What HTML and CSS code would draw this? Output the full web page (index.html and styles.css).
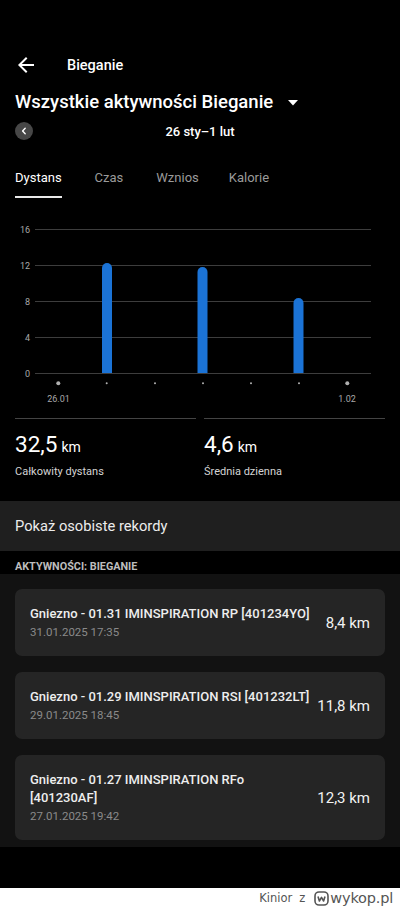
FILE: index.html
```html
<!DOCTYPE html>
<html lang="pl">
<head>
<meta charset="utf-8">
<title>Bieganie</title>
<link rel="stylesheet" href="styles.css">
</head>
<body>
<div class="screen">
  <header class="topbar">
    <svg class="back" width="24" height="24" viewBox="0 0 24 24"><path d="M20 11H7.83l5.59-5.59L12 4l-8 8 8 8 1.41-1.41L7.83 13H20v-2z" fill="#fff"/></svg>
    <span class="topbar-title">Bieganie</span>
  </header>

  <div class="title-row">
    <h1 class="title">Wszystkie aktywności Bieganie</h1>
    <svg class="caret" width="10" height="6" viewBox="0 0 10 6"><path d="M0 0h10L5 5.5z" fill="#fff"/></svg>
  </div>

  <div class="date-row">
    <span class="round-btn"><svg width="8" height="8" viewBox="0 0 8 8"><path d="M5.2 1.2L2.6 4l2.6 2.8" fill="none" stroke="#fff" stroke-width="1.4" stroke-linecap="round" stroke-linejoin="round"/></svg></span>
    <span class="date">26 sty–1 lut</span>
  </div>

  <nav class="tabs">
    <span class="tab active">Dystans</span>
    <span class="tab">Czas</span>
    <span class="tab">Wznios</span>
    <span class="tab">Kalorie</span>
  </nav>

  <svg class="chart" width="400" height="220" viewBox="0 0 400 220">
    <g stroke="#3d3d3d" stroke-width="1">
      <line x1="35" y1="31.5" x2="371" y2="31.5"/>
      <line x1="35" y1="67.5" x2="371" y2="67.5"/>
      <line x1="35" y1="103.5" x2="371" y2="103.5"/>
      <line x1="35" y1="139.5" x2="371" y2="139.5"/>
      <line x1="35" y1="175.5" x2="371" y2="175.5"/>
    </g>
    <g class="axis" text-anchor="end">
      <text x="30" y="34.5">16</text>
      <text x="30" y="70.5">12</text>
      <text x="30" y="106.5">8</text>
      <text x="30" y="142.5">4</text>
      <text x="30" y="178.5">0</text>
    </g>
    <g fill="#1b73d6">
      <path d="M102 175V70a5 5 0 0 1 10 0V175z"/>
      <path d="M197.5 175V74a5 5 0 0 1 10 0V175z"/>
      <path d="M293.5 175V105a5 5 0 0 1 10 0V175z"/>
    </g>
    <g fill="#b0b0b0">
      <circle cx="58.3" cy="185.3" r="2"/>
      <circle cx="106.7" cy="185.3" r="1"/>
      <circle cx="155" cy="185.3" r="1"/>
      <circle cx="203" cy="185.3" r="1"/>
      <circle cx="251" cy="185.3" r="1"/>
      <circle cx="299" cy="185.3" r="1"/>
      <circle cx="347.3" cy="185.3" r="2"/>
    </g>
    <g class="axis" text-anchor="middle">
      <text x="58.5" y="203.5">26.01</text>
      <text x="347" y="203.5">1.02</text>
    </g>
  </svg>

  <section class="stats">
    <div class="stat">
      <div class="stat-value">32,5<span class="unit">km</span></div>
      <div class="stat-label">Całkowity dystans</div>
    </div>
    <div class="stat">
      <div class="stat-value">4,6<span class="unit">km</span></div>
      <div class="stat-label">Średnia dzienna</div>
    </div>
  </section>

  <div class="records">Pokaż osobiste rekordy</div>

  <div class="section-label">AKTYWNOŚCI: BIEGANIE</div>

  <section class="activities">
    <div class="card">
      <div class="card-text">
        <div class="card-title">Gniezno - 01.31 IMINSPIRATION RP [401234YO]</div>
        <div class="card-date">31.01.2025 17:35</div>
      </div>
      <div class="card-km">8,4 km</div>
    </div>
    <div class="card">
      <div class="card-text">
        <div class="card-title">Gniezno - 01.29 IMINSPIRATION RSI [401232LT]</div>
        <div class="card-date">29.01.2025 18:45</div>
      </div>
      <div class="card-km">11,8 km</div>
    </div>
    <div class="card">
      <div class="card-text">
        <div class="card-title">Gniezno - 01.27 IMINSPIRATION RFo [401230AF]</div>
        <div class="card-date">27.01.2025 19:42</div>
      </div>
      <div class="card-km">12,3 km</div>
    </div>
  </section>

  <div class="filler"></div>

  <footer class="watermark">
    <span class="wm-user">Kinior</span>
    <span class="wm-z">z</span>
    <svg class="wm-logo" width="15" height="15" viewBox="0 0 15 15"><rect x="1" y="1" width="13" height="13" rx="4" fill="none" stroke="#555" stroke-width="1.6"/><path d="M4 5.5l1.4 4.5 2.1-3.6 2.1 3.6L11 5.5" fill="none" stroke="#555" stroke-width="1.6" stroke-linejoin="round"/></svg>
    <span class="wm-site">wykop.pl</span>
  </footer>
</div>
</body>
</html>
```

FILE: styles.css
```css
* { box-sizing: border-box; }
html, body { margin: 0; padding: 0; background: #000; }
body {
  font-family: Roboto, "Noto Sans", "Liberation Sans", sans-serif;
  color: #fff;
}
.screen {
  width: 400px;
  height: 908px;
  display: flex;
  flex-direction: column;
  padding-top: 41px;
  overflow: hidden;
}
.topbar {
  height: 48px;
  display: flex;
  align-items: center;
  padding-left: 14px;
}
.back { display: block; }
.topbar-title {
  margin-left: 29px;
  font-size: 14.5px;
  font-weight: 500;
}
.title-row {
  height: 26px;
  display: flex;
  align-items: center;
  padding-left: 15px;
}
.title {
  margin: 0;
  font-size: 18.5px;
  font-weight: 500;
  line-height: 26px;
  letter-spacing: 0;
}
.caret { margin-left: 15px; margin-top: 1px; }
.date-row {
  margin-top: 5px;
  height: 22px;
  display: flex;
  align-items: center;
  padding-left: 15px;
}
.round-btn {
  width: 18px;
  height: 18px;
  border-radius: 50%;
  background: #474747;
  display: flex;
  align-items: center;
  justify-content: center;
}
.date {
  flex: 1;
  text-align: center;
  margin-right: 33px;
  font-size: 13px;
  font-weight: 500;
}
.tabs {
  margin-top: 18px;
  display: flex;
  gap: 33px;
  padding-left: 15px;
}
.tab {
  padding: 8px 0 8px;
  line-height: 20px;
  font-size: 13px;
  color: #9a9a9a;
  border-bottom: 2px solid transparent;
}
.tab.active {
  color: #fff;
  border-bottom-color: #e8e8e8;
}
.tab:nth-child(3) { margin-right: -3px; }
.chart { display: block; }
.axis text {
  font-family: Roboto, sans-serif;
  font-size: 9px;
  fill: #a8a8a8;
}
.stats {
  display: flex;
  gap: 8px;
  padding: 0 15px 21px;
}
.stat {
  flex: 1;
  border-top: 1px solid #444;
  padding-top: 11px;
}
.stat-value {
  font-size: 22.5px;
  line-height: 28px;
}
.unit {
  font-size: 14px;
  margin-left: 4px;
}
.stat-label {
  margin-top: 3px;
  font-size: 11px;
  line-height: 16px;
  color: #d4d4d4;
}
.records {
  height: 50px;
  background: #1f1f1f;
  display: flex;
  align-items: center;
  padding-left: 15px;
  font-size: 14.7px;
  color: #ececec;
}
.section-label {
  height: 23px;
  padding: 9px 0 0 15px;
  font-size: 10.8px;
  line-height: 14px;
  font-weight: 700;
  color: #bdbdbd;
}
.activities {
  background: #121212;
  padding: 15px 15px 7px;
  display: flex;
  flex-direction: column;
  gap: 16px;
}
.card {
  background: #252525;
  border-radius: 7px;
  padding: 16px 15px 15px;
  display: flex;
  align-items: center;
}
.card-text {
  width: 281px;
  flex: none;
}
.card-title {
  font-size: 13px;
  font-weight: 500;
  line-height: 18px;
  color: #eee;
}
.card-date {
  font-size: 11.5px;
  line-height: 18px;
  color: #8a8a8a;
}
.card-km {
  margin-left: auto;
  font-size: 15px;
  color: #f2f2f2;
  white-space: nowrap;
}
.filler { flex: 1; }
.watermark {
  height: 20px;
  background: #fff;
  display: flex;
  align-items: center;
  justify-content: flex-end;
  padding-right: 7px;
  font-family: "DejaVu Sans", Verdana, sans-serif;
  color: #555;
}
.wm-user { font-size: 11.5px; }
.wm-z { font-size: 11.5px; margin-left: 7px; }
.wm-logo { margin-left: 9px; }
.wm-site { font-size: 14.5px; margin-left: 1px; letter-spacing: -0.2px; }
```
